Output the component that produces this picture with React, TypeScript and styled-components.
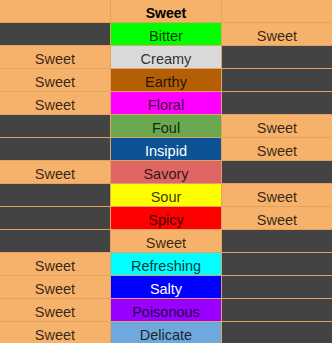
import { Fragment } from 'react'
import styled, { createGlobalStyle } from 'styled-components'

const GlobalStyle = createGlobalStyle`
  html, body {
    margin: 0;
    padding: 0;
    background: #f6b26b;
  }
`

const ORANGE = '#f6b26b'
const DARK = '#434343'

type Row = { left?: string; taste: string; bg: string; light?: boolean; right?: string }

const ROWS: Row[] = [
  { taste: 'Bitter', bg: '#00ff00', right: 'Sweet' },
  { left: 'Sweet', taste: 'Creamy', bg: '#d9d9d9' },
  { left: 'Sweet', taste: 'Earthy', bg: '#b45f06' },
  { left: 'Sweet', taste: 'Floral', bg: '#ff00ff' },
  { taste: 'Foul', bg: '#6aa84f', right: 'Sweet' },
  { taste: 'Insipid', bg: '#0b5394', light: true, right: 'Sweet' },
  { left: 'Sweet', taste: 'Savory', bg: '#e06666' },
  { taste: 'Sour', bg: '#ffff00', right: 'Sweet' },
  { taste: 'Spicy', bg: '#ff0000', right: 'Sweet' },
  { taste: 'Sweet', bg: ORANGE },
  { left: 'Sweet', taste: 'Refreshing', bg: '#00ffff' },
  { left: 'Sweet', taste: 'Salty', bg: '#0000ff', light: true },
  { left: 'Sweet', taste: 'Poisonous', bg: '#9900ff' },
  { left: 'Sweet', taste: 'Delicate', bg: '#6fa8dc' },
]

const Sheet = styled.div`
  display: grid;
  grid-template-columns: 110px 110px 110px;
  grid-auto-rows: 22px;
  gap: 1px;
  width: 332px;
  background: #e3a260;
  font-family: 'Liberation Sans', Arial, sans-serif;
`

const Cell = styled.div<{ $bg: string; $light?: boolean; $bold?: boolean }>`
  display: flex;
  align-items: center;
  justify-content: center;
  padding-top: 3px;
  background: ${(p) => p.$bg};
  color: ${(p) => (p.$light ? '#ffffff' : p.$bold ? '#000000' : 'rgba(0, 0, 0, 0.8)')};
  font-size: ${(p) => (p.$bold ? '14px' : '14.5px')};
  font-weight: ${(p) => (p.$bold ? 700 : 400)};
  white-space: nowrap;
`

export default function App() {
  return (
    <>
      <GlobalStyle />
      <Sheet>
        <Cell $bg={ORANGE} />
        <Cell $bg={ORANGE} $bold>
          Sweet
        </Cell>
        <Cell $bg={ORANGE} />
        {ROWS.map((row, i) => (
          <Fragment key={i}>
            <Cell $bg={row.left ? ORANGE : DARK}>{row.left}</Cell>
            <Cell $bg={row.bg} $light={row.light}>
              {row.taste}
            </Cell>
            <Cell $bg={row.right ? ORANGE : DARK}>{row.right}</Cell>
          </Fragment>
        ))}
      </Sheet>
    </>
  )
}
